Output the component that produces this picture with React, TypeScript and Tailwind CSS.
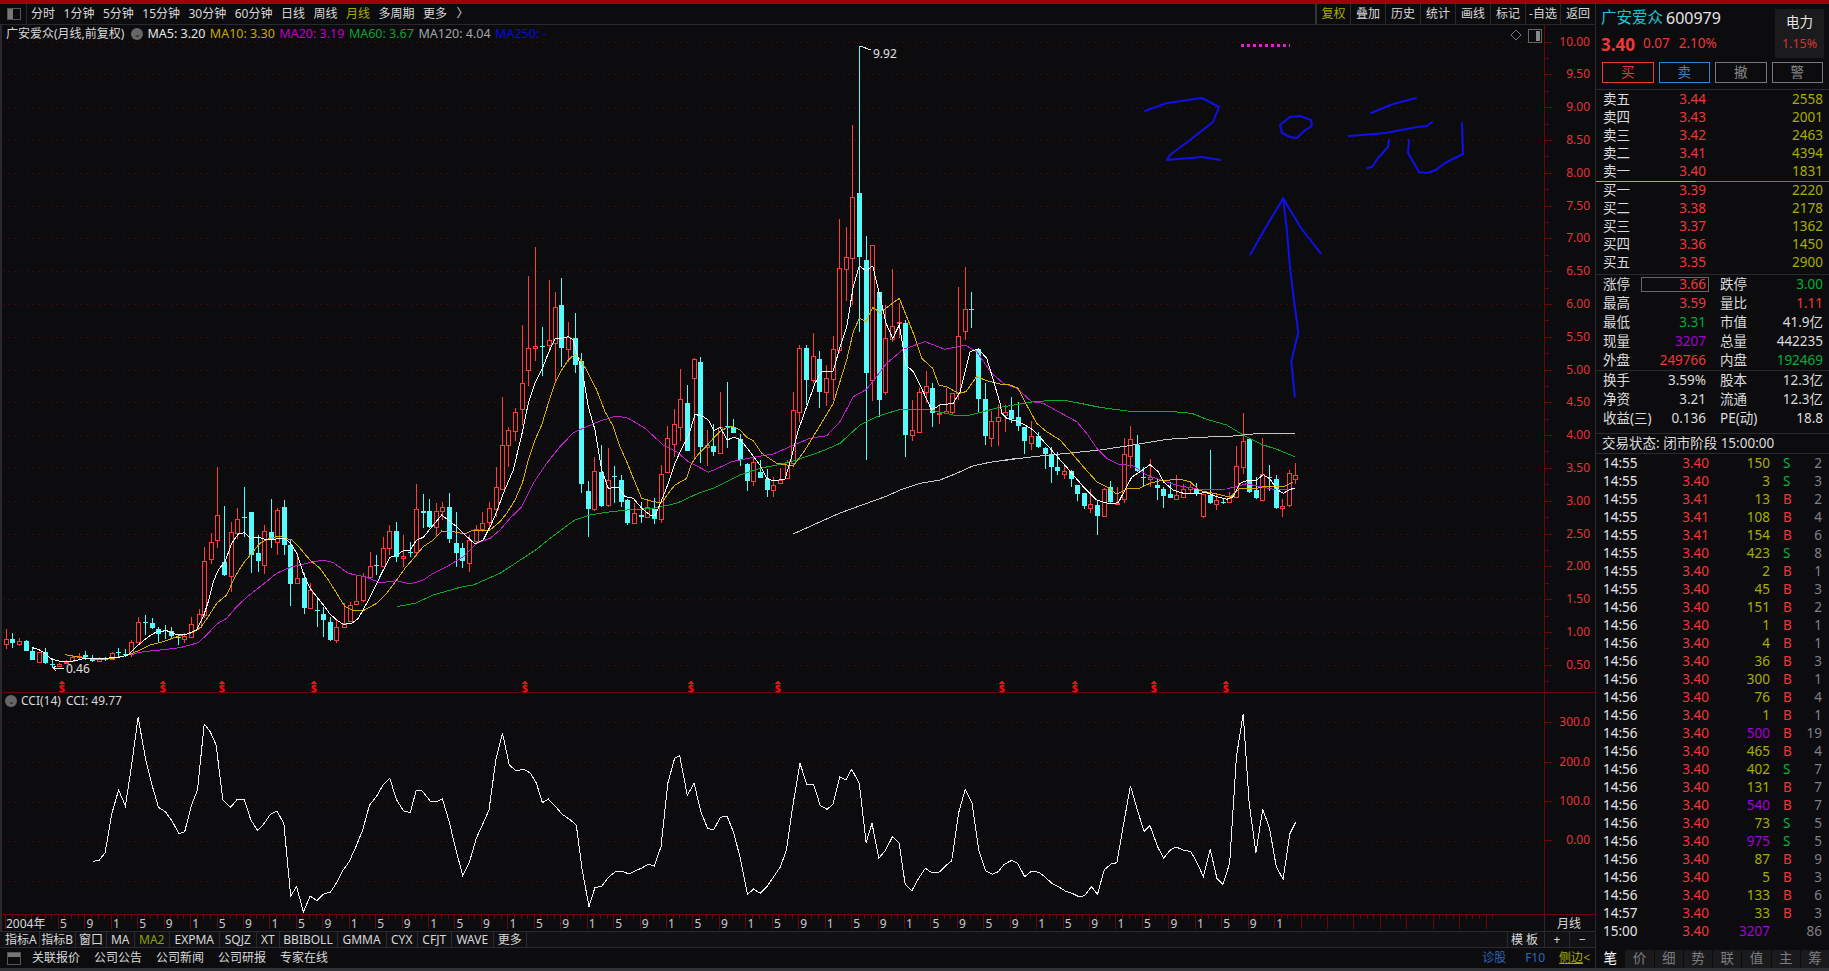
type Pt = [number, number];
type Candle = [number, number, number, number, number, "r" | "c"];

const BG = "#0c0c0f";
const A: Pt = [0, 460];
const C: Pt = [490, 230];
const D: Pt = [740, 30];
const E: Pt = [1000, 380];

// candle and line values are read off the chart at 3x, so each block keeps its own origin
const z = (o: Pt, pts: Pt[]): Pt[] => pts.map(([x, y]) => [o[0] + x / 3, o[1] + y / 3] as Pt);
const pl = (pts: Pt[]) => pts.map(([x, y]) => `${x.toFixed(1)},${y.toFixed(1)}`).join(" ");

const candlesA: Candle[] = [
  [18, 538, 553, 508, 566, "r"], [37, 537, 548, 520, 563, "c"], [58, 543, 552, 535, 558, "r"], [79, 544, 572, 540, 573, "c"],
  [97, 573, 599, 563, 600, "c"], [118, 577, 605, 575, 606, "r"], [136, 577, 608, 565, 613, "c"], [156, 612, 613, 595, 625, "c"],
  [177, 613, 618, 608, 622, "r"], [197, 605, 608, 600, 612, "r"], [216, 590, 603, 585, 606, "r"], [238, 587, 592, 578, 596, "r"],
  [256, 586, 590, 574, 600, "c"], [277, 594, 602, 585, 606, "c"], [296, 597, 604, 590, 606, "r"], [316, 597, 600, 590, 604, "c"],
  [337, 580, 597, 575, 600, "r"], [354, 576, 578, 565, 590, "c"], [375, 582, 586, 568, 592, "c"], [394, 545, 583, 540, 590, "r"],
  [415, 487, 545, 472, 548, "r"], [436, 487, 488, 465, 525, "c"], [455, 489, 505, 474, 507, "c"], [475, 506, 521, 500, 548, "c"],
  [495, 510, 513, 495, 538, "c"], [514, 512, 528, 500, 535, "c"], [535, 530, 535, 522, 555, "c"], [553, 528, 538, 520, 548, "r"],
  [574, 493, 530, 472, 532, "r"], [596, 462, 500, 448, 504, "r"], [613, 304, 465, 262, 475, "r"], [634, 247, 298, 220, 312, "r"],
  [652, 166, 241, 22, 264, "r"], [673, 306, 345, 138, 348, "c"], [694, 217, 347, 185, 395, "r"], [712, 176, 218, 145, 238, "r"],
  [733, 172, 174, 82, 230, "c"], [754, 156, 285, 155, 340, "c"], [773, 280, 302, 225, 335, "c"], [793, 214, 316, 195, 342, "r"],
  [812, 216, 236, 118, 265, "c"], [832, 150, 247, 145, 285, "r"], [853, 141, 255, 120, 285, "c"], [871, 255, 372, 240, 438, "c"],
  [892, 355, 369, 280, 372, "r"], [911, 354, 444, 338, 462, "c"], [931, 391, 443, 370, 448, "r"], [952, 451, 453, 418, 500, "c"],
  [970, 462, 480, 442, 532, "c"], [990, 486, 539, 470, 542, "c"], [1009, 502, 539, 480, 548, "r"], [1031, 490, 500, 430, 500, "r"],
  [1051, 436, 483, 425, 486, "r"], [1069, 422, 431, 345, 432, "r"], [1090, 347, 420, 340, 425, "r"], [1111, 319, 350, 277, 352, "r"],
  [1129, 316, 319, 285, 345, "c"], [1150, 263, 317, 232, 320, "r"], [1168, 214, 265, 195, 285, "r"], [1189, 214, 292, 186, 305, "c"],
  [1210, 289, 295, 225, 320, "r"], [1230, 275, 277, 245, 290, "c"], [1249, 148, 275, 72, 285, "r"], [1268, 154, 160, 102, 205, "c"],
  [1288, 153, 202, 117, 205, "c"], [1309, 154, 200, 130, 228, "r"], [1327, 142, 154, 127, 180, "r"], [1348, 142, 236, 100, 250, "c"],
  [1369, 250, 278, 155, 322, "c"], [1387, 265, 302, 250, 325, "c"], [1408, 240, 310, 225, 335, "r"], [1427, 207, 242, 195, 250, "r"],
  [1447, 190, 208, 155, 215, "r"], [1468, 145, 187, 125, 210, "r"], [1487, 82, 146, 20, 170, "r"],
];

const candlesC: Candle[] = [
  [37, 646, 776, 502, 778, "r"], [55, 601, 646, 592, 710, "r"], [76, 547, 604, 535, 632, "r"], [97, 458, 536, 285, 585, "r"],
  [115, 355, 421, 138, 467, "r"], [136, 349, 353, 52, 392, "r"], [157, 348, 350, 292, 438, "c"], [176, 331, 346, 150, 360, "r"],
  [196, 232, 338, 186, 460, "r"], [214, 225, 353, 145, 410, "c"], [235, 320, 356, 277, 395, "r"], [256, 324, 404, 250, 428, "c"],
  [274, 392, 762, 370, 790, "c"], [295, 783, 837, 753, 920, "c"], [313, 724, 838, 682, 842, "r"], [334, 725, 828, 645, 832, "c"],
  [355, 751, 826, 655, 832, "r"], [373, 738, 740, 708, 820, "c"], [394, 750, 816, 735, 830, "c"], [412, 810, 879, 808, 884, "c"],
  [433, 849, 880, 820, 882, "r"], [454, 856, 860, 817, 878, "c"], [472, 832, 862, 812, 864, "r"], [493, 837, 866, 803, 882, "c"],
  [514, 733, 868, 705, 878, "r"], [532, 625, 727, 588, 730, "r"], [553, 583, 643, 537, 680, "r"], [571, 508, 590, 418, 632, "r"],
  [592, 519, 662, 465, 663, "c"], [613, 388, 445, 385, 683, "r"], [631, 396, 651, 381, 698, "c"], [652, 646, 652, 600, 708, "r"],
  [670, 648, 666, 582, 678, "c"], [691, 592, 668, 487, 670, "r"], [712, 589, 591, 457, 653, "c"], [730, 592, 608, 567, 610, "c"],
  [751, 628, 690, 612, 707, "c"], [772, 702, 752, 700, 782, "c"], [790, 695, 754, 685, 768, "r"], [810, 727, 743, 690, 745, "c"],
];

const candlesD: Candle[] = [
  [80, 1347, 1380, 1316, 1400, "c"], [100, 1366, 1380, 1340, 1400, "r"], [120, 1350, 1358, 1315, 1362, "r"], [140, 1296, 1343, 1290, 1345, "r"],
  [160, 1141, 1300, 1087, 1305, "r"], [178, 955, 1147, 945, 1175, "r"], [199, 954, 1049, 945, 1125, "c"], [220, 979, 1049, 910, 1060, "r"],
  [238, 988, 1085, 964, 1133, "c"], [259, 1043, 1085, 1005, 1127, "r"], [280, 958, 1048, 918, 1110, "r"], [298, 715, 960, 568, 970, "r"],
  [319, 682, 718, 590, 812, "r"], [337, 502, 685, 285, 825, "r"], [358, 490, 680, 48, 905, "c"], [379, 690, 1030, 618, 1290, "c"],
  [397, 646, 1050, 646, 1112, "r"], [418, 786, 1109, 786, 1160, "c"], [436, 925, 1085, 825, 1095, "r"], [457, 889, 926, 717, 935, "r"],
  [478, 877, 880, 818, 925, "r"], [496, 880, 1215, 870, 1280, "c"], [517, 1201, 1214, 1110, 1232, "r"], [538, 1085, 1205, 1075, 1208, "r"],
  [557, 1069, 1085, 1023, 1120, "r"], [577, 1075, 1150, 1058, 1190, "c"], [596, 1148, 1152, 1122, 1182, "r"], [617, 1144, 1148, 1075, 1150, "r"],
  [637, 1090, 1145, 1090, 1155, "r"], [655, 919, 1090, 771, 1110, "r"], [676, 838, 904, 711, 930, "r"], [694, 837, 839, 786, 895, "c"],
  [715, 958, 1107, 958, 1145, "c"], [736, 1107, 1218, 1060, 1245, "c"], [754, 1174, 1223, 1143, 1252, "r"], [775, 1162, 1174, 1125, 1248, "r"],
];

const candlesE: Candle[] = [
  [14, 97, 104, 75, 155, "r"], [34, 90, 118, 52, 130, "c"], [55, 112, 138, 66, 152, "c"], [73, 141, 183, 141, 222, "c"],
  [94, 168, 188, 124, 210, "r"], [115, 168, 202, 156, 204, "c"], [134, 205, 222, 200, 267, "c"], [154, 223, 261, 202, 308, "c"],
  [172, 261, 273, 216, 285, "c"], [193, 274, 281, 258, 297, "r"], [214, 273, 297, 270, 320, "c"], [232, 315, 342, 315, 363, "c"],
  [253, 339, 378, 339, 387, "c"], [271, 373, 383, 328, 398, "r"], [292, 375, 408, 360, 465, "c"], [313, 327, 408, 323, 411, "r"],
  [331, 321, 367, 303, 372, "c"], [352, 368, 370, 320, 372, "r"], [373, 222, 356, 175, 370, "r"], [391, 178, 227, 138, 265, "r"],
  [412, 195, 272, 165, 275, "c"], [430, 291, 293, 262, 320, "c"], [451, 291, 296, 238, 320, "r"], [472, 316, 324, 293, 360, "c"],
  [490, 327, 348, 320, 384, "c"], [511, 342, 354, 305, 355, "c"], [529, 346, 356, 285, 358, "r"], [550, 328, 351, 312, 352, "r"],
  [571, 322, 328, 312, 340, "r"], [589, 326, 340, 310, 348, "c"], [610, 342, 408, 342, 413, "r"], [631, 345, 369, 210, 371, "c"],
  [649, 361, 371, 340, 390, "r"], [668, 367, 369, 358, 372, "c"], [688, 353, 367, 335, 368, "r"], [709, 259, 350, 198, 352, "r"],
  [730, 184, 260, 100, 282, "r"], [748, 178, 336, 178, 340, "c"], [769, 330, 354, 292, 358, "c"], [787, 283, 359, 175, 362, "r"],
  [808, 290, 293, 255, 332, "c"], [829, 297, 384, 285, 388, "c"], [847, 379, 385, 358, 410, "r"], [868, 280, 374, 270, 380, "r"],
  [886, 286, 298, 250, 312, "r"],
];

const candles = [
  ...candlesA.map((c) => ({ c, o: A })),
  ...candlesC.map((c) => ({ c, o: C })),
  ...candlesD.map((c) => ({ c, o: D })),
  ...candlesE.map((c) => ({ c, o: E })),
];

const ma5: Pt[] = [
  ...z(A, [[97,563],[115,568],[135,580],[155,598],[180,604],[205,605],[225,602],[250,596],[300,596],[355,592],[385,585],[415,555],[445,530],[470,515],[500,512],[530,524],[560,522],[590,510],[610,470],[625,425],[640,365],[655,330],[675,305],[695,250],[715,222],[735,218],[750,235],[775,232],[795,238],[815,240],[835,235],[855,235],[875,255],[890,280],[910,340],[930,385],[950,410],[970,435],[990,462],[1010,480],[1030,493],[1055,490],[1075,475],[1100,430],[1130,370],[1150,330],[1170,292],[1190,285],[1210,272],[1230,270],[1250,240],[1270,232],[1300,195],[1325,165],[1345,180],[1370,200],[1395,225],[1425,252],[1450,240],[1475,190]]),
  ...z(C, [[20,845],[40,790],[70,720],[95,615],[115,520],[135,460],[155,420],[175,370],[195,326],[215,325],[235,320],[250,330],[265,385],[280,440],[295,530],[315,600],[335,720],[355,775],[385,772],[405,800],[430,805],[455,835],[480,855],[495,858],[515,810],[535,760],[555,700],[575,655],[595,620],[615,553],[640,560],[655,570],[672,602],[690,592],[712,630],[730,622]]),
  ...z(D, [[0,1228],[30,1265],[60,1305],[80,1345],[100,1353],[135,1347],[155,1280],[175,1200],[200,1130],[225,1060],[245,1025],[280,1023],[300,950],[320,890],[340,770],[358,708],[378,722],[398,708],[418,790],[438,880],[458,925],[478,885],[498,1005],[520,1025],[540,1065],[575,1140],[600,1125],[640,1120],[660,1085],[690,965],[715,957],[740,985],[760,1050],[780,1120]]),
  ...z(E, [[5,100],[20,115],[60,127],[100,150],[150,205],[200,262],[250,320],[290,360],[330,372],[355,368],[380,320],[395,292],[420,275],[450,254],[475,275],[490,305],[520,330],[550,340],[590,340],[620,338],[650,350],[680,358],[700,350],[720,310],[745,300],[770,300],[790,284],[810,297],[830,328],[850,340],[870,328],[886,325]]),
];

const ma10: Pt[] = [
  ...z(A, [[195,584],[220,588],[260,595],[300,600],[340,595],[385,585],[420,570],[450,555],[490,545],[530,530],[570,520],[600,505],[625,470],[650,430],[680,405],[705,350],[730,310],[755,280],[780,250],[800,238],[835,228],[875,240],[900,265],[930,300],[960,325],[985,360],[1010,400],[1035,440],[1060,452],[1090,452],[1130,430],[1160,400],[1190,360],[1215,325],[1245,290],[1270,260],[1300,240],[1325,213],[1360,215],[1395,222],[1420,210],[1470,210]]),
  ...z(C, [[30,875],[50,850],[75,810],[97,760],[115,690],[135,630],[155,585],[175,520],[195,460],[215,420],[235,390],[255,372],[272,390],[295,430],[320,480],[345,545],[370,590],[390,650],[410,695],[430,745],[455,805],[490,815],[515,818],[535,790],[555,765],[590,745],[605,700],[625,672],[650,648],[670,625],[690,605],[712,592],[730,590]]),
  ...z(D, [[0,1200],[20,1222],[40,1232],[65,1270],[110,1300],[160,1308],[195,1260],[235,1195],[280,1120],[320,990],[340,905],[358,865],[378,875],[398,832],[420,848],[478,805],[500,860],[520,910],[545,985],[578,1015],[596,1065],[620,1070],[655,1090],[678,1085],[710,1040],[740,1052],[780,1062]]),
  ...z(E, [[30,15],[55,25],[80,75],[110,130],[140,155],[180,180],[220,225],[250,260],[290,305],[320,320],[350,342],[385,325],[420,324],[450,310],[480,302],[540,298],[570,305],[600,332],[650,342],[690,352],[720,325],[770,325],[800,318],[850,320],[880,305]]),
];

const ma20: Pt[] = [
  ...z(A, [[385,585],[430,575],[480,570],[540,563],[595,548],[625,520],[650,492],[680,475],[710,440],[740,412],[780,380],[830,340],[870,322],[920,310],[970,300],[1000,308],[1045,340],[1100,352],[1140,368],[1190,362],[1230,372],[1270,360],[1300,340],[1340,320],[1390,290],[1430,250],[1470,235]]),
  ...z(C, [[30,900],[60,865],[95,830],[130,760],[170,700],[210,650],[250,608],[290,590],[330,573],[380,558],[415,565],[465,595],[520,645],[560,665],[595,695],[625,710],[655,727],[690,712],[725,695]]),
  ...z(D, [[0,1290],[50,1280],[100,1272],[150,1250],[210,1225],[260,1217],[300,1175],[340,1100],[380,1078],[440,1000],[490,958],[555,935],[615,958],[675,945],[710,965],[755,1030],[790,1060],[830,1075]]),
  ...z(E, [[95,65],[130,70],[175,95],[230,125],[260,160],[290,205],[320,235],[355,252],[400,258],[440,285],[490,303],[540,318],[600,328],[680,327],[740,311],[780,320],[830,330],[880,328]]),
];

const ma60: Pt[] = [
  ...z(A, [[1190,440],[1245,430],[1300,405],[1380,382],[1420,375],[1500,340]]),
  ...z(C, [[140,958],[180,925],[220,895],[255,870],[300,855],[350,847],[410,840],[490,835],[560,820],[625,790],[670,775]]),
  ...z(D, [[0,1335],[60,1315],[110,1305],[170,1290],[250,1262],[300,1240],[360,1185],[410,1160],[480,1138],[570,1140],[640,1155],[690,1155],[780,1132]]),
  ...z(E, [[60,72],[100,65],[145,62],[200,62],[240,70],[300,82],[380,93],[520,95],[575,100],[620,118],[680,135],[730,165],[790,195],[830,208],[885,230]]),
];

const ma120: Pt[] = [
  ...z(D, [[159,1512],[300,1449],[441,1398],[485,1378],[540,1360],[600,1350],[650,1330],[700,1307],[750,1297],[830,1285]]),
  ...z(E, [[0,243],[100,230],[200,220],[300,210],[400,195],[500,178],[600,172],[700,168],[780,160],[885,160]]),
];

const cciRaw: Pt[] = [
  [110,514],[117,511],[124,488],[132,370],[140,300],[148,348],[155,230],[163,82],[172,210],[180,290],[187,352],[195,365],[203,392],[211,431],[218,425],[226,345],[233,300],[241,102],[248,125],[255,165],[263,330],[272,352],[280,328],[288,327],[296,390],[304,421],[312,400],[319,373],[327,363],[335,402],[343,618],[350,590],[358,666],[366,618],[374,632],[382,612],[390,606],[398,575],[405,540],[412,515],[420,470],[428,420],[436,345],[444,320],[452,285],[460,265],[468,330],[476,362],[484,368],[491,302],[498,302],[508,334],[516,334],[522,327],[530,395],[538,480],[546,556],[554,515],[562,445],[570,400],[577,360],[585,210],[593,130],[601,225],[609,243],[618,237],[626,250],[633,280],[640,338],[647,327],[655,348],[663,372],[672,388],[680,405],[687,540],[695,650],[702,593],[710,589],[718,562],[726,545],[734,543],[742,552],[750,542],[758,533],[765,522],[772,528],[780,470],[788,280],[796,205],[802,197],[811,316],[819,280],[827,365],[835,415],[842,420],[850,382],[858,379],[866,430],[874,510],[882,614],[889,597],[897,610],[905,590],[913,560],[921,530],[928,480],[936,340],[944,220],[952,283],[960,283],[968,347],[976,358],[983,342],[991,260],[998,270],[1005,238],[1014,280],[1022,458],[1029,400],[1037,505],[1045,480],[1053,440],[1061,460],[1068,582],[1076,602],[1084,565],[1092,535],[1100,549],[1108,547],[1116,527],[1123,512],[1131,370],[1139,298],[1147,340],[1155,480],[1163,543],[1171,553],[1178,545],[1185,523],[1194,511],[1201,520],[1209,560],[1217,544],[1226,547],[1233,560],[1241,580],[1249,590],[1257,603],[1265,610],[1273,620],[1280,617],[1288,590],[1295,613],[1303,540],[1311,522],[1318,518],[1326,400],[1334,287],[1342,360],[1350,424],[1357,407],[1366,470],[1373,505],[1381,480],[1388,471],[1396,480],[1405,485],[1412,515],[1420,560],[1428,478],[1436,565],[1443,583],[1451,520],[1459,200],[1467,72],[1474,340],[1482,488],[1490,358],[1498,415],[1506,530],[1514,568],[1522,432],[1529,396],
];
const cci: Pt[] = cciRaw.map(([x, y]) => [x / 1.18, 690 + y / 3]);

const priceY = (p: number) => 41.5 + (10 - p) * 65.6;
const priceLabels = Array.from({ length: 20 }, (_, i) => 10 - i * 0.5);
const cciGrid = [722, 762, 802, 841, 881];
const cciLabels: [string, number][] = [["300.0", 722], ["200.0", 762], ["100.0", 801], ["0.00", 840]];
const marks = [62, 163, 222, 314, 525, 691, 778, 1002, 1075, 1154, 1226];
const months = ["5", "9", "1"];
// the month labels slip by one after the long halt, so label 35 reads 5 instead of 1
const monthLabel = (i: number) => (i < 35 ? months[i % 3] : months[(i + 1) % 3]);
const axisTicks = Array.from({ length: 226 }, (_, i) => 5.5 + i * 6.61).filter((x) => x < 1544);

// marker pen notes drawn over the chart
const s = (pts: Pt[]) => pts.map(([x, y]) => [x * 1.1665, y * 1.1665] as Pt);
const ink: Pt[][] = [
  [[1145,111],[1167,103],[1202,98],[1219,107],[1213,122],[1190,140],[1170,155],[1167,160],[1202,157],[1220,160]],
  [[1290,117],[1300,116],[1311,120],[1312,126],[1304,131],[1297,138],[1290,137],[1282,133],[1280,125],[1290,117]],
  [[1371,113],[1393,104],[1416,98]],
  [[1349,136],[1386,133],[1417,127],[1427,126],[1432,122]],
  [[1389,140],[1388,147],[1378,158],[1372,167],[1367,168]],
  [[1409,140],[1408,153],[1419,172],[1427,173],[1436,170],[1445,163],[1463,154],[1462,123]],
  s([[1110,340],[1107,310],[1113,285],[1109,255],[1106,230],[1103,195],[1100,170]]),
  s([[1072,218],[1085,195],[1100,170],[1115,195],[1132,217]]),
];

function CandleMark({ c, o }: { c: Candle; o: Pt }) {
  const [zx, top, bot, hi, lo, t] = c;
  const x = Math.round(o[0] + zx / 3);
  const y = (v: number) => Math.round(o[1] + v / 3);
  const bt = y(top);
  const bb = Math.max(y(bot), bt + 1);
  if (t === "c") {
    return (
      <g>
        <line x1={x + 0.5} x2={x + 0.5} y1={y(hi)} y2={y(lo)} stroke="#54fcfc" />
        <rect x={x - 2} y={bt} width={5} height={bb - bt} fill="#54fcfc" />
      </g>
    );
  }
  return (
    <g>
      <line x1={x + 0.5} x2={x + 0.5} y1={y(hi)} y2={bt} stroke="#ff3c3c" />
      <line x1={x + 0.5} x2={x + 0.5} y1={bb} y2={y(lo)} stroke="#ff3c3c" />
      <rect x={x - 1.5} y={bt + 0.5} width={4} height={bb - bt} fill={BG} stroke="#ff3c3c" />
    </g>
  );
}

function Chart() {
  return (
    <svg width={1595} height={907} viewBox="0 24 1595 907" className="absolute -left-[2px] -top-[1px]" shapeRendering="crispEdges">
      {priceLabels.map((p) => (
        <line key={p} x1={3} x2={1544} y1={Math.round(priceY(p)) + 0.5} y2={Math.round(priceY(p)) + 0.5} stroke="#5c0d0d" strokeDasharray="1 5" />
      ))}
      {cciGrid.map((g) => (
        <line key={g} x1={3} x2={1544} y1={g + 0.5} y2={g + 0.5} stroke="#5c0d0d" strokeDasharray="1 5" />
      ))}

      <line x1={1544.5} x2={1544.5} y1={24} y2={915} stroke="#6a0606" />
      <line x1={3} x2={1595} y1={692.5} y2={692.5} stroke="#6a0606" />
      <line x1={3} x2={1595} y1={914.5} y2={914.5} stroke="#6a0606" />
      {priceLabels.map((p) => (
        <g key={p}>
          <line x1={1545} x2={1552} y1={Math.round(priceY(p)) + 0.5} y2={Math.round(priceY(p)) + 0.5} stroke="#6a0606" />
          <line x1={1545} x2={1549} y1={Math.round(priceY(p - 0.25)) + 0.5} y2={Math.round(priceY(p - 0.25)) + 0.5} stroke="#6a0606" />
          <text x={1590} y={priceY(p) + 4} textAnchor="end" fontSize={12} fill="#e23636">{p.toFixed(2)}</text>
        </g>
      ))}
      {cciLabels.map(([l, y]) => (
        <g key={l}>
          <line x1={1545} x2={1552} y1={y + 0.5} y2={y + 0.5} stroke="#6a0606" />
          <text x={1590} y={y + 4} textAnchor="end" fontSize={12} fill="#e23636">{l}</text>
        </g>
      ))}

      {candles.map(({ c, o }, i) => (
        <CandleMark key={i} c={c} o={o} />
      ))}

      <polyline points={pl(ma120)} fill="none" stroke="#c8c8c8" />
      <polyline points={pl(ma60)} fill="none" stroke="#10a828" />
      <polyline points={pl(ma20)} fill="none" stroke="#c41ed0" />
      <polyline points={pl(ma10)} fill="none" stroke="#d8ac00" />
      <polyline points={pl(ma5)} fill="none" stroke="#ffffff" />

      {/* high and low tags */}
      <polyline points="860,46 871,50" fill="none" stroke="#e8e8e8" />
      <text x={873} y={58} fontSize={12} fill="#e0e0e0">9.92</text>
      <polyline points="53,668 64,668" fill="none" stroke="#e8e8e8" />
      <polyline points="56,666 53,668 56,671" fill="none" stroke="#e8e8e8" />
      <text x={66} y={673} fontSize={12} fill="#e0e0e0">0.46</text>

      {marks.map((m) => (
        <g key={m}>
          <polygon points={`${m},680 ${m - 3},684 ${m + 3},684`} fill="#f01010" />
          <text x={m} y={692} textAnchor="middle" fontSize={11} fontWeight={700} fill="#f01010">$</text>
        </g>
      ))}

      <polyline points={pl(cci)} fill="none" stroke="#f0f0f0" />

      {/* time axis */}
      {axisTicks.map((x, i) => (
        <line key={x} x1={x} x2={x} y1={915} y2={i % 4 === 0 ? 929 : 919} stroke="#6a0606" />
      ))}
      <text x={6} y={928} fontSize={12} fill="#d8d8d8">2004年</text>
      {Array.from({ length: 47 }, (_, i) => (
        <text key={i} x={60 + i * 26.44} y={928} fontSize={12} fill="#c8c8c8">{monthLabel(i)}</text>
      ))}
      <line x1={1544.5} x2={1544.5} y1={915} y2={931} stroke="#2a2a2e" />
      <text x={1557} y={928} fontSize={12} fill="#d8d8d8">月线</text>

      {/* corner buttons */}
      <polygon points="1516,30 1521,35 1516,40 1511,35" fill="none" stroke="#777" />
      <rect x={1528.5} y={29.5} width={13} height={13} fill="none" stroke="#666" />
      <rect x={1536} y={31} width={4} height={10} fill="#888" />

      {/* pen */}
      <line x1={1241} x2={1290} y1={45.5} y2={45.5} stroke="#e020e0" strokeWidth={3} strokeDasharray="3 3" />
      <g shapeRendering="auto">
        {ink.map((p, i) => (
          <polyline key={i} points={pl(p)} fill="none" stroke="#1010e8" strokeWidth={2} strokeLinejoin="round" strokeLinecap="round" />
        ))}
      </g>
    </svg>
  );
}

const periods = ["分时", "1分钟", "5分钟", "15分钟", "30分钟", "60分钟", "日线", "周线", "月线", "多周期", "更多"];
const tools = ["复权", "叠加", "历史", "统计", "画线", "标记", "-自选", "返回"];
const legend: [string, string][] = [
  ["MA5: 3.20", "text-[#e4e4e4]"],
  ["MA10: 3.30", "text-[#c8a800]"],
  ["MA20: 3.19", "text-[#c000c4]"],
  ["MA60: 3.67", "text-[#10a030]"],
  ["MA120: 4.04", "text-[#a4a4a4]"],
  ["MA250: -", "text-[#0808e0]"],
];
const tabs: [string, string][] = [
  ["指标A", "w-[36.5px]"], ["指标B", "w-[36.5px]"], ["窗口", "w-[31px]"], ["MA", "w-[27.5px]"], ["MA2", "w-[35.5px] text-[#8ca000]"],
  ["EXPMA", "w-[49.5px]"], ["SQJZ", "w-[37.5px]"], ["XT", "w-[22.5px]"], ["BBIBOLL", "w-[58px]"], ["GMMA", "w-[49px]"],
  ["CYX", "w-[31.5px]"], ["CFJT", "w-[33.5px]"], ["WAVE", "w-[42.5px]"], ["更多", "w-[32.5px]"],
];
const links = ["关联报价", "公司公告", "公司新闻", "公司研报", "专家在线"];

const asks: [string, string, string][] = [
  ["卖五", "3.44", "2558"], ["卖四", "3.43", "2001"], ["卖三", "3.42", "2463"], ["卖二", "3.41", "4394"], ["卖一", "3.40", "1831"],
];
const bids: [string, string, string][] = [
  ["买一", "3.39", "2220"], ["买二", "3.38", "2178"], ["买三", "3.37", "1362"], ["买四", "3.36", "1450"], ["买五", "3.35", "2900"],
];

const RED = "text-[#f23636]";
const GREEN = "text-[#00b034]";
const WHITE = "text-[#dcdcdc]";
const PURPLE = "text-[#a400d8]";

const stats1: [string, string, string, string, string, string][] = [
  ["涨停", "3.66", RED, "跌停", "3.00", GREEN],
  ["最高", "3.59", RED, "量比", "1.11", RED],
  ["最低", "3.31", GREEN, "市值", "41.9亿", WHITE],
  ["现量", "3207", PURPLE, "总量", "442235", WHITE],
  ["外盘", "249766", RED, "内盘", "192469", GREEN],
];
const stats2: [string, string, string, string, string, string][] = [
  ["换手", "3.59%", WHITE, "股本", "12.3亿", WHITE],
  ["净资", "3.21", WHITE, "流通", "12.3亿", WHITE],
  ["收益(三)", "0.136", WHITE, "PE(动)", "18.8", WHITE],
];

const ticks: [string, string, string, string, string][] = [
  ["14:55", "3.40", "150", "S", "2"], ["14:55", "3.40", "3", "S", "3"], ["14:55", "3.41", "13", "B", "2"],
  ["14:55", "3.41", "108", "B", "4"], ["14:55", "3.41", "154", "B", "6"], ["14:55", "3.40", "423", "S", "8"],
  ["14:55", "3.40", "2", "B", "1"], ["14:55", "3.40", "45", "B", "3"], ["14:56", "3.40", "151", "B", "2"],
  ["14:56", "3.40", "1", "B", "1"], ["14:56", "3.40", "4", "B", "1"], ["14:56", "3.40", "36", "B", "3"],
  ["14:56", "3.40", "300", "B", "1"], ["14:56", "3.40", "76", "B", "4"], ["14:56", "3.40", "1", "B", "1"],
  ["14:56", "3.40", "500", "B", "19"], ["14:56", "3.40", "465", "B", "4"], ["14:56", "3.40", "402", "S", "7"],
  ["14:56", "3.40", "131", "B", "7"], ["14:56", "3.40", "540", "B", "7"], ["14:56", "3.40", "73", "S", "5"],
  ["14:56", "3.40", "975", "S", "5"], ["14:56", "3.40", "87", "B", "9"], ["14:56", "3.40", "5", "B", "3"],
  ["14:56", "3.40", "133", "B", "6"], ["14:57", "3.40", "33", "B", "3"], ["15:00", "3.40", "3207", "", "86"],
];
const bigLots = ["500", "540", "975", "3207"];

function QuoteRow({ row }: { row: [string, string, string] }) {
  return (
    <div className="flex h-[18px] items-center pl-[7px] pr-[6px]">
      <span className="w-[103px] flex justify-between">
        <span className="text-[#dcdcdc]">{row[0]}</span>
        <span className={RED}>{row[1]}</span>
      </span>
      <span className="flex-1 text-right text-[#a8ac00]">{row[2]}</span>
    </div>
  );
}

function StatRow({ row, boxed }: { row: [string, string, string, string, string, string]; boxed?: boolean }) {
  return (
    <div className="flex h-[19px] items-center pl-[7px] pr-[6px]">
      <span className="relative flex w-[103px] justify-between">
        <span className="whitespace-nowrap text-[#dcdcdc]">{row[0]}</span>
        <span className={row[2]}>{row[1]}</span>
        {boxed && <span className="absolute bottom-[-1px] right-[-3px] top-[-1px] w-[68px] border border-[#666]" />}
      </span>
      <span className="ml-[14px] flex flex-1 justify-between">
        <span className="text-[#dcdcdc]">{row[3]}</span>
        <span className={row[5]}>{row[4]}</span>
      </span>
    </div>
  );
}

export default function App() {
  return (
    <div className="flex h-screen w-full flex-col overflow-hidden bg-[#0c0c0f] font-['Noto_Sans','Noto_Sans_CJK_SC',sans-serif] text-[12px] leading-none text-[#d8d8d8]">
      <div className="h-[4px] shrink-0 bg-[#a0000a]" />
      <div className="flex min-h-0 flex-1">
        <div className="flex w-[1596px] shrink-0 flex-col border-r border-[#2a2a2e]">
          <div className="flex h-[20px] shrink-0 items-center">
            <div className="ml-[7px] flex h-[12px] w-[14px] border border-[#555]">
              <div className="w-[5px] bg-[#777]" />
            </div>
            <div className="ml-[5px] mr-[4px] h-full w-px bg-[#2a2a2e]" />
            <div className="flex items-center gap-[8.5px]">
              {periods.map((p) => (
                <span key={p} className={p === "月线" ? "text-[#a8ac00]" : ""}>{p}</span>
              ))}
              <span className="ml-[1px]">〉</span>
            </div>
            <div className="ml-auto flex h-full">
              {tools.map((t, i) => (
                <span key={t} className={`flex w-[35px] items-center justify-center border-l border-[#2a2a2e] ${i === 0 ? "border-l-2 border-l-[#333] text-[#a8ac00]" : ""}`}>{t}</span>
              ))}
            </div>
          </div>

          <div className="relative h-[907px] shrink-0 border-l-2 border-t border-[#2a2a2e]">
            <Chart />
            <div className="absolute left-[4px] top-[-1px] flex h-[20px] items-center text-[12.5px]">
              <span className="text-[12px]">广安爱众(月线,前复权)</span>
              <span className="ml-[7px] flex h-[12px] w-[12px] items-center justify-center rounded-full bg-[#666] text-[8px] text-[#111]">⌄</span>
              <div className="ml-[4px] flex gap-[4.5px]">
                {legend.map(([l, c]) => (
                  <span key={l} className={c}>{l}</span>
                ))}
              </div>
            </div>
            <div className="absolute left-[3px] top-[666px] flex h-[20px] items-center">
              <span className="flex h-[12px] w-[12px] items-center justify-center rounded-full bg-[#666] text-[8px] text-[#111]">⌄</span>
              <span className="ml-[4px]">CCI(14)</span>
              <span className="ml-[5px]">CCI: 49.77</span>
            </div>
          </div>

          <div className="flex h-[17px] shrink-0 items-center border-y border-[#2a2a2e] bg-[#111114]">
            <div className="flex h-full pl-[3px]">
              {tabs.map(([t, c]) => (
                <span key={t} className={`flex items-center justify-center whitespace-nowrap border-r border-[#2a2a2e] ${c}`}>{t}</span>
              ))}
            </div>
            <div className="ml-auto flex h-full">
              <span className="flex w-[37px] items-center justify-center border-l border-[#2a2a2e] tracking-[3px]">模板</span>
              <span className="flex w-[25px] items-center justify-center border-l border-[#2a2a2e]">+</span>
              <span className="flex w-[26px] items-center justify-center border-l border-[#2a2a2e]">−</span>
            </div>
          </div>

          <div className="flex min-h-0 flex-1 items-center">
            <div className="ml-[7px] h-[13px] w-[14px] border border-[#555]">
              <div className="h-[4px] bg-[#777]" />
            </div>
            <div className="ml-[11px] flex gap-[14px]">
              {links.map((l) => (
                <span key={l}>{l}</span>
              ))}
            </div>
            <div className="ml-auto flex items-center pr-[5px]">
              <span className="text-[#2f66b8]">诊股</span>
              <span className="ml-[19px] text-[#2f66b8]">F10</span>
              <span className="ml-[14px] text-[#a8ac00]"><span className="underline">侧边</span>&lt;</span>
            </div>
          </div>
        </div>

        <div className="flex min-w-0 flex-1 flex-col text-[13.5px]">
          <div className="flex h-[54px] shrink-0 justify-between">
            <div className="pl-[5px]">
              <div className="flex h-[28px] items-center">
                <span className="text-[15.5px] text-[#18c8d8]">广安爱众</span>
                <span className="ml-[3px] text-[16px] text-[#e4e4e4]">600979</span>
              </div>
              <div className="mt-[2px] flex h-[20px] items-center text-[#f23636]">
                <span className="text-[17px] font-bold">3.40</span>
                <span className="ml-[8px]">0.07</span>
                <span className="ml-[9px]">2.10%</span>
              </div>
            </div>
            <div className="mr-[5px] mt-[5px] flex h-[49px] w-[49px] flex-col items-center justify-around bg-[#1b1b1e] py-[3px]">
              <span className="text-[#e4e4e4]">电力</span>
              <span className="text-[12.5px] text-[#d83232]">1.15%</span>
            </div>
          </div>
          <div className="mt-[4px] flex h-[21px] shrink-0 gap-[5px] px-[6px]">
            <span className="flex flex-1 items-center justify-center border border-[#e83838] text-[#e83838]">买</span>
            <span className="flex flex-1 items-center justify-center border border-[#3484d0] text-[#3484d0]">卖</span>
            <span className="flex flex-1 items-center justify-center border border-[#777] text-[#888]">撤</span>
            <span className="flex flex-1 items-center justify-center border border-[#777] text-[#888]">警</span>
          </div>
          <div className="mt-[6px] h-px shrink-0 bg-[#2a2a2e]" />
          <div className="pt-[1px]">
            {asks.map((r) => (
              <QuoteRow key={r[0]} row={r} />
            ))}
          </div>
          <div className="flex h-px shrink-0">
            <div className="w-[100px] bg-[#e09a20]" />
            <div className="flex-1 bg-[#2c86d8]" />
          </div>
          {bids.map((r) => (
            <QuoteRow key={r[0]} row={r} />
          ))}
          <div className="mt-[2px] h-px shrink-0 bg-[#2a2a2e]" />
          {stats1.map((r, i) => (
            <StatRow key={r[0]} row={r} boxed={i === 0} />
          ))}
          <div className="h-px shrink-0 bg-[#2a2a2e]" />
          {stats2.map((r) => (
            <StatRow key={r[0]} row={r} />
          ))}
          <div className="mt-[5px] h-px shrink-0 bg-[#2a2a2e]" />
          <div className="flex h-[19px] shrink-0 items-center whitespace-nowrap pl-[6px] text-[#dcdcdc]">交易状态: 闭市阶段 15:00:00</div>
          <div className="mb-[1px] h-px shrink-0 bg-[#2a2a2e]" />
          {ticks.map((t, i) => (
            <div key={i} className="flex h-[18px] shrink-0 items-center pl-[7px]">
              <span className="w-[50px] text-[#e4e4e4]">{t[0]}</span>
              <span className={`w-[56px] text-right ${RED}`}>{t[1]}</span>
              <span className={`w-[61px] text-right ${bigLots.includes(t[2]) ? PURPLE : "text-[#a8ac00]"}`}>{t[2]}</span>
              <span className={`ml-[13px] w-[10px] ${t[3] === "S" ? "text-[#00b83c]" : RED}`}>{t[3]}</span>
              <span className="flex-1 pr-[7px] text-right text-[#808084]">{t[4]}</span>
            </div>
          ))}
          <div className="mt-auto flex h-[18px] shrink-0">
            {["笔", "价", "细", "势", "联", "值", "主", "筹"].map((t, i) => (
              <span key={t} className={`flex flex-1 items-center justify-center ${i === 0 ? "text-white" : "ml-px bg-[#1a1a1d] text-[#7c7c80]"}`}>{t}</span>
            ))}
          </div>
        </div>
      </div>
      <div className="h-[3px] shrink-0 bg-[#2e3236]" />
    </div>
  );
}
